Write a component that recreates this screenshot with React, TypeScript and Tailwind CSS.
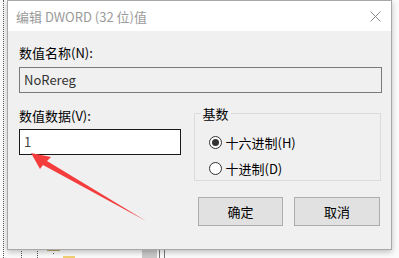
import React from "react";

const font = { fontFamily: '"Noto Sans CJK SC", "Liberation Sans", sans-serif' };

function Radio({ checked, label }: { checked?: boolean; label: string }) {
  return (
    <div className="flex items-center h-[17px]">
      <span className="w-[13px] h-[13px] rounded-full border border-[#333] bg-white flex items-center justify-center">
        {checked && <span className="w-[7px] h-[7px] rounded-full bg-[#333]" />}
      </span>
      <span className="ml-[4px] text-[13px] leading-[17px] text-black">{label}</span>
    </div>
  );
}

export default function App() {
  return (
    <div className="relative w-[399px] h-[258px] overflow-hidden bg-[#fbfbfb]" style={font}>
      {/* tree view behind the dialog */}
      <div className="absolute left-[3px] top-0 h-full border-l border-dotted border-[#555]" />
      <div className="absolute left-[21px] top-[248px] h-[10px] border-l border-dotted border-[#555]" />
      <div className="absolute left-[37px] top-[248px] h-[10px] border-l border-dotted border-[#555]" />
      <div className="absolute left-[47px] top-[249px] w-[13px] h-[2px] bg-[#b9a862]" />
      <div className="absolute left-[53px] top-[253px] w-[1px] h-[1px] bg-[#555]" />
      <div className="absolute left-[63px] top-[256px] w-[12px] h-[2px] bg-[#f0d070]" />
      <div className="absolute left-[142px] top-[249px] w-[15px] h-[9px] bg-[#c9c9c9]" />
      <div className="absolute left-[159px] top-[249px] w-[1px] h-[9px] bg-[#777]" />
      <div className="absolute left-[164px] top-[249px] w-[1px] h-[9px] bg-[#777]" />

      {/* dialog */}
      <div className="relative ml-[7px] w-[385px] h-[250px] border border-[#a8a8a8] bg-[#f0f0f0] shadow-[0_2px_6px_rgba(0,0,0,0.25)] flex flex-col">
        <div className="h-[30px] bg-white flex items-center justify-between pl-[8px] pr-[10px]">
          <span className="text-[13px] text-[#9a9a9a] leading-[17px]">编辑 DWORD (32 位)值</span>
          <svg width="11" height="11" viewBox="0 0 11 11">
            <path d="M0.5 0.5 L10.5 10.5 M10.5 0.5 L0.5 10.5" stroke="#8a8a8a" strokeWidth="1" />
          </svg>
        </div>

        <div className="flex flex-col pl-[11px] pr-[10px]">
          <div className="mt-[13px] text-[13px] leading-[17px] text-black">数值名称(N):</div>
          <div className="mt-[6px] h-[26px] w-[363px] border border-[#7a7a7a] bg-[#f0f0f0] flex items-center pl-[4px] text-[13px] text-[#333]">
            NoRereg
          </div>

          <div className="flex items-start">
            <div className="mt-[14px] flex flex-col w-[162px]">
              <div className="text-[13px] leading-[17px] text-black">数值数据(V):</div>
              <div className="mt-[5px] h-[26px] border border-[#1a1a1a] bg-white flex items-center pl-[4px] text-[13px] text-[#444]">
                1
              </div>
            </div>

            <fieldset className="ml-[13px] mt-[12px] w-[188px] h-[76px] border border-[#dcdcdc] pl-[14px]">
              <legend className="ml-[-8px] px-[2px] text-[13px] leading-[17px] text-black">基数</legend>
              <div className="mt-[12px] flex flex-col gap-[9px]">
                <Radio checked label="十六进制(H)" />
                <Radio label="十进制(D)" />
              </div>
            </fieldset>
          </div>

          <div className="mt-[16px] flex justify-end gap-[11px] pr-[1px]">
            <button className="w-[85px] h-[29px] border border-[#adadad] bg-[#e1e1e1] text-[13px] text-black">确定</button>
            <button className="w-[86px] h-[29px] border border-[#adadad] bg-[#e1e1e1] text-[13px] text-black">取消</button>
          </div>
        </div>
      </div>

      {/* red annotation arrow */}
      <svg className="absolute left-0 top-0" width="399" height="258" viewBox="0 0 399 258">
        <polygon points="31,153 51,157 47,161 146,221 43,165 40,169" fill="#f43c3c" />
      </svg>
    </div>
  );
}
